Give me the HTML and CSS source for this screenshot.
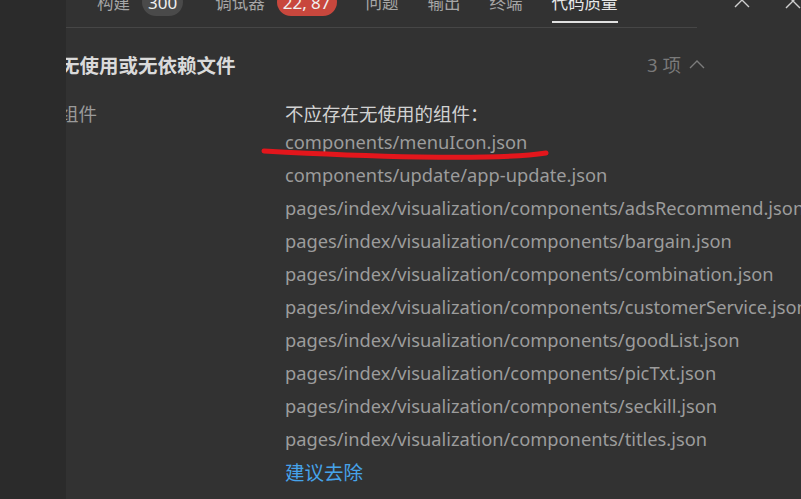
FILE: index.html
```html
<!DOCTYPE html>
<html lang="zh-CN">
<head>
<meta charset="utf-8">
<link rel="stylesheet" href="styles.css">
</head>
<body>
<div class="side"></div>
<div class="main">
  <div class="header">
    <div class="tablist">
      <div class="tab">构建<span class="badge">300</span></div>
      <div class="tab">调试器<span class="badge red">22, 87</span></div>
      <div class="tab">问题</div>
      <div class="tab">输出</div>
      <div class="tab">终端</div>
      <div class="tab active">代码质量</div>
    </div>
    <div class="actions">
      <svg class="icon-up" width="16" height="9" viewBox="0 0 16 9"><path d="M1 8 L8 1 L15 8" fill="none" stroke="#cfcfcf" stroke-width="1.4"/></svg>
      <svg class="icon-x" width="16" height="16" viewBox="0 0 16 16"><path d="M1 -6 L15 8 M15 -6 L1 8" fill="none" stroke="#cfcfcf" stroke-width="1.4"/></svg>
    </div>
  </div>
  <div class="content">
    <div class="sec-head">
      <div class="sec-title">无使用或无依赖文件</div>
      <div class="sec-count">3 项 <svg width="16" height="9" viewBox="0 0 16 9"><path d="M1 8 L8 1 L15 8" fill="none" stroke="#7c7c7c" stroke-width="1.4"/></svg></div>
    </div>
    <div class="row">
      <div class="label">组件</div>
      <div class="list">
        <div class="desc">不应存在无使用的组件：</div>
        <div class="item first">components/menuIcon.json</div>
        <div class="item">components/update/app-update.json</div>
        <div class="item">pages/index/visualization/components/adsRecommend.json</div>
        <div class="item">pages/index/visualization/components/bargain.json</div>
        <div class="item">pages/index/visualization/components/combination.json</div>
        <div class="item">pages/index/visualization/components/customerService.json</div>
        <div class="item">pages/index/visualization/components/goodList.json</div>
        <div class="item">pages/index/visualization/components/picTxt.json</div>
        <div class="item">pages/index/visualization/components/seckill.json</div>
        <div class="item">pages/index/visualization/components/titles.json</div>
        <div class="item link">建议去除</div>
      </div>
    </div>
  </div>
</div>
<svg class="scribble" width="801" height="499" viewBox="0 0 801 499"><path d="M264 151 C 300 153, 360 156, 420 157 C 480 158, 520 157, 546 153" fill="none" stroke="#e3161c" stroke-width="5" stroke-linecap="round"/></svg>
</body>
</html>
```
FILE: styles.css
```css
html, body {
  margin: 0;
  padding: 0;
  height: 100%;
}
body {
  display: flex;
  background: #323232;
  font-family: "Noto Sans", "Noto Sans CJK SC", sans-serif;
  overflow: hidden;
  position: relative;
}
.side {
  width: 66px;
  flex: none;
  background: #2b2b2b;
}
.main {
  flex: 1;
  overflow: hidden;
  background: #323232;
}
.header {
  display: flex;
  height: 29px;
}
.tablist {
  width: 644px;
  height: 28px;
  border-bottom: 1px solid #464646;
  display: flex;
  align-items: flex-start;
  padding-left: 31px;
  box-sizing: border-box;
  gap: 29px;
}
.tab {
  display: flex;
  align-items: center;
  height: 34px;
  margin-top: -12px;
  padding-bottom: 6px;
  box-sizing: border-box;
  font-size: 16.5px;
  color: #a6a6a6;
  font-family: "Noto Sans CJK SC", sans-serif;
  white-space: nowrap;
}
.tab.active {
  color: #e8e8e8;
  border-bottom: 2px solid #e0e0e0;
  height: 35px;
}
.badge {
  margin-left: 12px;
  margin-right: 3px;
  height: 28px;
  padding: 0 6px;
  border-radius: 14px;
  background: #4a4a4a;
  color: #f0f0f0;
  font-family: "Noto Sans", sans-serif;
  font-size: 17px;
  display: flex;
  align-items: center;
}
.badge.red {
  background: #c8473d;
  margin-right: 0;
  padding: 0 6px;
}
.actions {
  flex: 1;
  display: flex;
  align-items: flex-start;
}
.icon-up {
  margin-left: 37px;
  margin-top: -1px;
}
.icon-x {
  margin-left: 35px;
  margin-top: 0;
}
.content {
  margin-left: -6px;
  width: 645px;
}
.sec-head {
  display: flex;
  justify-content: space-between;
  align-items: center;
  height: 28px;
  margin-top: 21px;
}
.sec-title {
  font-family: "Noto Sans CJK SC", sans-serif;
  font-weight: bold;
  font-size: 19.5px;
  color: #dadada;
}
.sec-count {
  font-size: 18.5px;
  color: #7a7a7a;
  display: flex;
  align-items: center;
  gap: 8px;
  margin-right: 0;
  font-family: "Noto Sans", "Noto Sans CJK SC", sans-serif;
}
.row {
  display: flex;
  margin-top: 21px;
}
.label {
  width: 225px;
  flex: none;
  font-size: 18.5px;
  color: #9a9a9a;
  line-height: 28px;
  font-family: "Noto Sans CJK SC", sans-serif;
}
.list {
  display: flex;
  flex-direction: column;
  white-space: nowrap;
}
.desc {
  font-size: 18.5px;
  line-height: 28px;
  color: #d2d2d2;
  font-family: "Noto Sans CJK SC", sans-serif;
}
.item {
  font-size: 18.3px;
  line-height: 33px;
  color: #9c9c9c;
}
.item.first {
  margin-top: -2px;
}
.item.link {
  color: #46a3ea;
  font-family: "Noto Sans CJK SC", sans-serif;
  font-size: 19.5px;
}
.scribble {
  position: absolute;
  left: 0;
  top: 0;
  pointer-events: none;
}
```
